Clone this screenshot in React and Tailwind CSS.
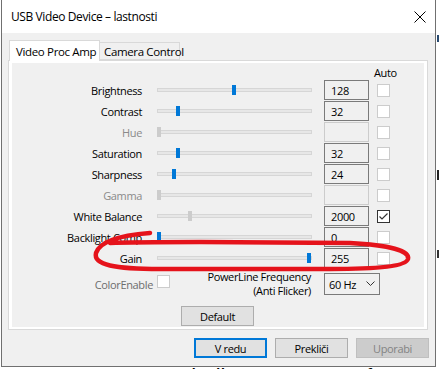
import React from "react";

const rows = [
  { label: "Brightness", value: "128", thumb: 75 },
  { label: "Contrast", value: "32", thumb: 19 },
  { label: "Hue", value: "", thumb: 0, disabled: true },
  { label: "Saturation", value: "32", thumb: 19 },
  { label: "Sharpness", value: "24", thumb: 15 },
  { label: "Gamma", value: "", thumb: 0, disabled: true },
  { label: "White Balance", value: "2000", thumb: 31, greyThumb: true, checked: true },
  { label: "Backlight Comp", value: "0", thumb: 0 },
  { label: "Gain", value: "255", thumb: 150 },
];

function Row({ r }) {
  const grey = r.disabled || r.greyThumb;
  return (
    <div className="flex h-[20px] items-center">
      <div
        className={
          "w-[130px] text-right whitespace-nowrap " +
          (r.disabled ? "text-[#8a8a8a]" : "text-black")
        }
      >
        {r.label}
      </div>
      <div className="relative ml-[15px] flex h-[20px] w-[155px] items-center">
        <div className="h-[4px] w-full border border-[#d6d6d6] bg-[#e7e7e7]" />
        <div
          className={
            "absolute top-[5px] h-[10px] w-[4px] " +
            (grey ? "bg-[#cccccc]" : "bg-[#0078d7]")
          }
          style={{ left: r.thumb }}
        />
      </div>
      <div
        className={
          "ml-[12px] flex h-[20px] w-[45px] items-center border bg-[#f0f0f0] pl-[6px] text-black " +
          (r.disabled ? "border-[#cccccc]" : "border-[#7a7a7a]")
        }
      >
        {r.value}
      </div>
      {r.checked ? (
        <div className="ml-[8px] flex h-[13px] w-[13px] items-center justify-center border border-[#333333] bg-white">
          <svg width="11" height="11" viewBox="0 0 11 11">
            <polyline points="1.5,5.5 4,8 9.5,2.5" fill="none" stroke="#333" strokeWidth="1.2" />
          </svg>
        </div>
      ) : (
        <div className="ml-[8px] h-[13px] w-[13px] border border-[#cccccc] bg-white" />
      )}
    </div>
  );
}

export default function App() {
  return (
    <div
      className="relative h-[369px] w-[439px] overflow-hidden bg-white text-[11px] leading-[15px] tracking-[-0.35px]"
      style={{ fontFamily: '"Open Sans", "Noto Sans", sans-serif' }}
    >
      <div className="flex">
        {/* window */}
        <div className="ml-[1px] flex h-[367px] w-[436px] flex-col border-x border-b border-[#707070] bg-[#f0f0f0]">
          {/* title bar */}
          <div className="flex h-[33px] items-center justify-between bg-white pl-[9px] pr-[8px]">
            <span className="text-[12px] tracking-[-0.4px] text-black">USB Video Device – lastnosti</span>
            <svg width="12" height="12" viewBox="0 0 12 12" className="mr-[1px]">
              <path d="M0.5 0.5 L11.5 11.5 M11.5 0.5 L0.5 11.5" stroke="#000" strokeWidth="1" />
            </svg>
          </div>
          {/* body */}
          <div className="flex flex-col pl-[6px] pt-[7px]">
            {/* tabs */}
            <div className="flex h-[20px] items-start pl-[1px]">
              <div className="relative z-10 flex h-[21px] w-[91px] items-center whitespace-nowrap border-x border-t border-[#d9d9d9] bg-white pl-[6px] text-[11.5px] text-black">
                Video Proc Amp
              </div>
              <div className="mt-[2px] flex h-[18px] w-[80px] items-center whitespace-nowrap border-y border-r border-[#d9d9d9] bg-[#f0f0f0] pl-[4px] text-[11.5px] text-black">
                Camera Control
              </div>
            </div>
            {/* panel */}
            <div className="h-[270px] w-[420px] border border-[#d9d9d9] bg-white px-[3px] pb-[2px] pt-[2px]">
              <div className="flex h-full flex-col bg-[#f0f0f0] pt-[2px]">
                <div className="h-[15px] pl-[362px] text-black">Auto</div>
                <div className="flex flex-col gap-[1px]">
                  {rows.map((r) => (
                    <Row key={r.label} r={r} />
                  ))}
                </div>
                <div className="mt-[5px] flex h-[22px] items-start">
                  <div className="flex h-[22px] w-[141px] items-center justify-end text-[#6d6d6d]">
                    ColorEnable
                  </div>
                  <div className="ml-[4px] mt-[2px] h-[13px] w-[13px] border border-[#cccccc] bg-white" />
                  <div className="-mt-[3px] w-[141px] text-right leading-[14px] text-black">
                    <div className="whitespace-nowrap">PowerLine Frequency</div>
                    <div className="whitespace-nowrap">(Anti Flicker)</div>
                  </div>
                  <div className="ml-[13px] flex h-[22px] w-[56px] items-center justify-between border border-[#7a7a7a] bg-[#f0f0f0] pl-[4px] pr-[4px] text-black">
                    <span>60 Hz</span>
                    <svg width="9" height="6" viewBox="0 0 9 6">
                      <polyline points="0.5,0.5 4.5,4.5 8.5,0.5" fill="none" stroke="#333" strokeWidth="1" />
                    </svg>
                  </div>
                </div>
                <div className="mt-[11px] flex justify-center pr-[1px]">
                  <div className="flex h-[20px] w-[73px] items-center justify-center border border-[#adadad] bg-[#e1e1e1] text-black">
                    Default
                  </div>
                </div>
              </div>
            </div>
            {/* buttons */}
            <div className="mt-[8px] flex justify-end gap-[8px] pr-[6px]">
              <div className="flex h-[20px] w-[73px] items-center justify-center border-2 border-[#0078d7] bg-[#e1e1e1] text-black">
                V redu
              </div>
              <div className="flex h-[20px] w-[73px] items-center justify-center border border-[#adadad] bg-[#e1e1e1] text-black">
                Prekliči
              </div>
              <div className="flex h-[20px] w-[73px] items-center justify-center border border-[#bfbfbf] bg-[#cccccc] text-[#838383]">
                Uporabi
              </div>
            </div>
          </div>
        </div>
        {/* right-edge fragments */}
        <div className="flex flex-col pl-[1px]">
          <div className="mt-[35px] h-[7px] w-[2px] bg-[#2a4a70]" />
          <div className="mt-[128px] h-[10px] w-[2px] bg-[#222]" />
          <div className="mt-[70px] h-[8px] w-[2px] bg-[#333]" />
        </div>
      </div>
      {/* bottom text fragment */}
      <div
        className="-mt-[1px] pl-[168px] text-[22px] leading-[22px] tracking-normal text-black whitespace-nowrap"
        style={{ fontFamily: '"Liberation Sans", sans-serif' }}
      >
        Tehnik Parameter refer
      </div>
      {/* red hand-drawn ellipse */}
      <svg className="pointer-events-none absolute left-0 top-0" width="439" height="369">
        <path
          d="M150 233 C125 235 100 240 96 253 C93 265 115 269 160 269 L330 269 C380 269 406 266 408 259 C410 251 390 245 350 243 L200 242 C160 242 130 242 110 243"
          fill="none"
          stroke="#e5131b"
          strokeWidth="4.5"
          strokeLinecap="round"
          strokeLinejoin="round"
        />
      </svg>
    </div>
  );
}
